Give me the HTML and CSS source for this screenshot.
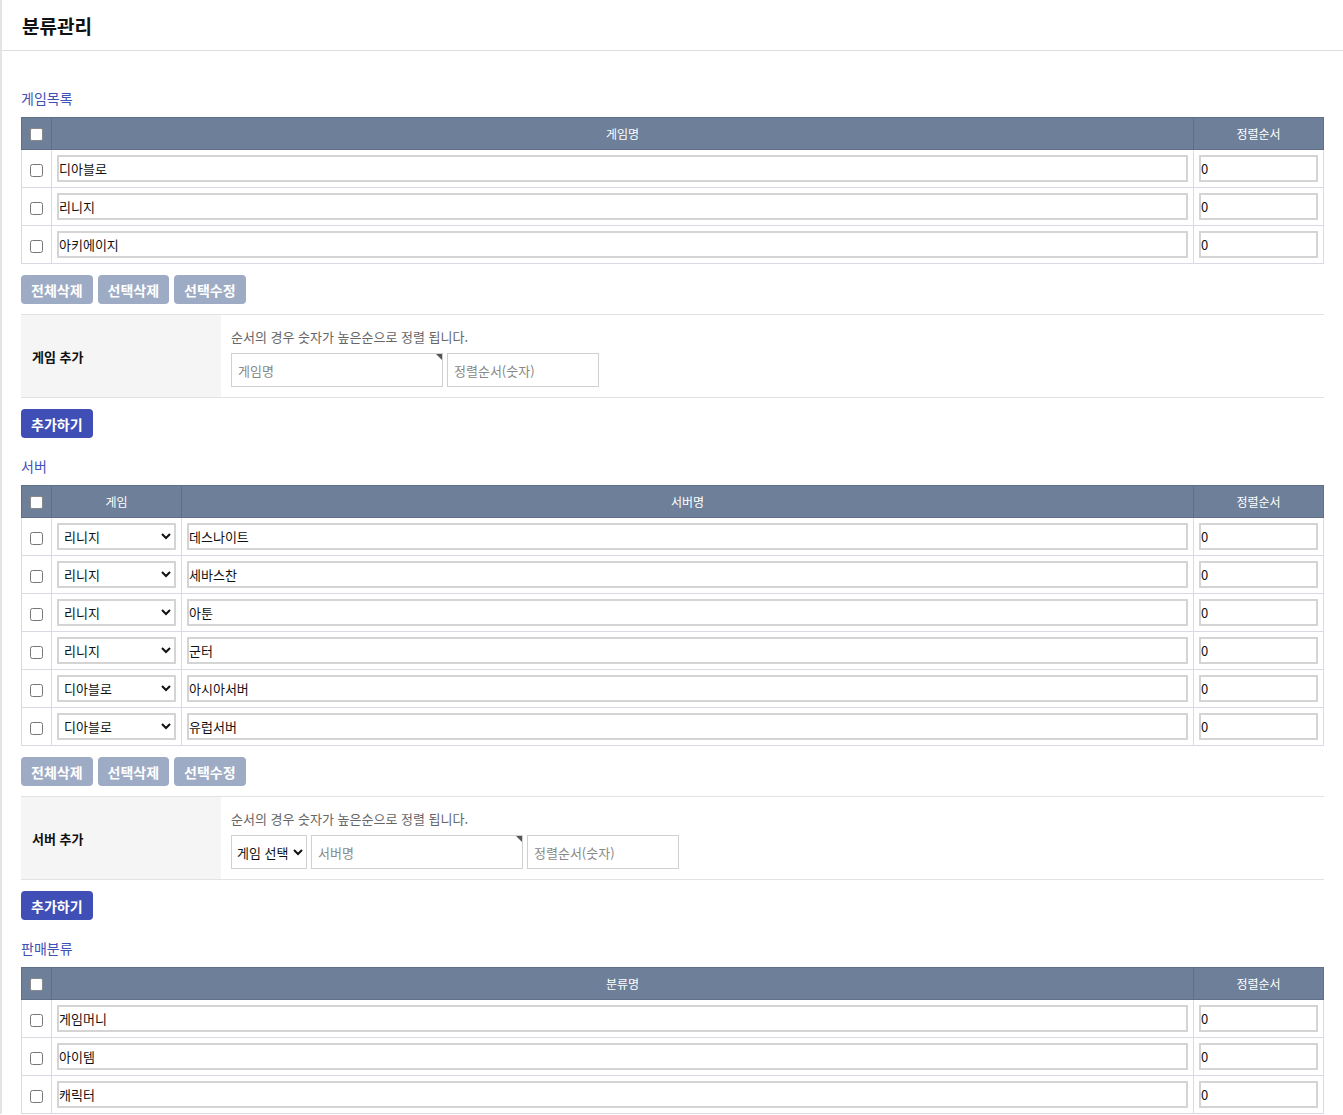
FILE: index.html
```html
<!DOCTYPE html>
<html lang="ko">
<head>
    <meta charset="UTF-8">
    <meta name="viewport" content="width=device-width, initial-scale=1.0">
    <title>분류관리</title>
    <link rel="stylesheet" href="styles.css">
</head>
<body>
    <div class="page-header">
        <h1>분류관리</h1>
    </div>

    <div class="content">
        <!-- 게임목록 -->
        <h2 class="section-title">게임목록</h2>
        <table class="list-table">
            <colgroup>
                <col class="col-check">
                <col>
                <col class="col-sort">
            </colgroup>
            <thead>
                <tr>
                    <th><input type="checkbox" class="head-check"></th>
                    <th>게임명</th>
                    <th>정렬순서</th>
                </tr>
            </thead>
            <tbody>
                <tr>
                    <td class="check"><input type="checkbox"></td>
                    <td><input type="text" class="cell-input" value="디아블로"></td>
                    <td><input type="text" class="cell-input" value="0"></td>
                </tr>
                <tr>
                    <td class="check"><input type="checkbox"></td>
                    <td><input type="text" class="cell-input" value="리니지"></td>
                    <td><input type="text" class="cell-input" value="0"></td>
                </tr>
                <tr>
                    <td class="check"><input type="checkbox"></td>
                    <td><input type="text" class="cell-input" value="아키에이지"></td>
                    <td><input type="text" class="cell-input" value="0"></td>
                </tr>
            </tbody>
        </table>
        <div class="btn-row">
            <button class="btn btn-gray">전체삭제</button>
            <button class="btn btn-gray">선택삭제</button>
            <button class="btn btn-gray">선택수정</button>
        </div>
        <div class="add-form">
            <div class="add-label">게임 추가</div>
            <div class="add-body">
                <p class="note">순서의 경우 숫자가 높은순으로 정렬 됩니다.</p>
                <div class="add-fields">
                    <span class="required"><input type="text" class="field-input field-name" placeholder="게임명"></span>
                    <input type="text" class="field-input field-sort" placeholder="정렬순서(숫자)">
                </div>
            </div>
        </div>
        <button class="btn btn-primary">추가하기</button>

        <!-- 서버 -->
        <h2 class="section-title">서버</h2>
        <table class="list-table">
            <colgroup>
                <col class="col-check">
                <col class="col-game">
                <col>
                <col class="col-sort">
            </colgroup>
            <thead>
                <tr>
                    <th><input type="checkbox" class="head-check"></th>
                    <th>게임</th>
                    <th>서버명</th>
                    <th>정렬순서</th>
                </tr>
            </thead>
            <tbody>
                <tr>
                    <td class="check"><input type="checkbox"></td>
                    <td><select class="cell-select"><option>리니지</option><option>디아블로</option><option>아키에이지</option></select></td>
                    <td><input type="text" class="cell-input" value="데스나이트"></td>
                    <td><input type="text" class="cell-input" value="0"></td>
                </tr>
                <tr>
                    <td class="check"><input type="checkbox"></td>
                    <td><select class="cell-select"><option>리니지</option><option>디아블로</option><option>아키에이지</option></select></td>
                    <td><input type="text" class="cell-input" value="세바스찬"></td>
                    <td><input type="text" class="cell-input" value="0"></td>
                </tr>
                <tr>
                    <td class="check"><input type="checkbox"></td>
                    <td><select class="cell-select"><option>리니지</option><option>디아블로</option><option>아키에이지</option></select></td>
                    <td><input type="text" class="cell-input" value="아툰"></td>
                    <td><input type="text" class="cell-input" value="0"></td>
                </tr>
                <tr>
                    <td class="check"><input type="checkbox"></td>
                    <td><select class="cell-select"><option>리니지</option><option>디아블로</option><option>아키에이지</option></select></td>
                    <td><input type="text" class="cell-input" value="군터"></td>
                    <td><input type="text" class="cell-input" value="0"></td>
                </tr>
                <tr>
                    <td class="check"><input type="checkbox"></td>
                    <td><select class="cell-select"><option>디아블로</option><option>리니지</option><option>아키에이지</option></select></td>
                    <td><input type="text" class="cell-input" value="아시아서버"></td>
                    <td><input type="text" class="cell-input" value="0"></td>
                </tr>
                <tr>
                    <td class="check"><input type="checkbox"></td>
                    <td><select class="cell-select"><option>디아블로</option><option>리니지</option><option>아키에이지</option></select></td>
                    <td><input type="text" class="cell-input" value="유럽서버"></td>
                    <td><input type="text" class="cell-input" value="0"></td>
                </tr>
            </tbody>
        </table>
        <div class="btn-row">
            <button class="btn btn-gray">전체삭제</button>
            <button class="btn btn-gray">선택삭제</button>
            <button class="btn btn-gray">선택수정</button>
        </div>
        <div class="add-form">
            <div class="add-label">서버 추가</div>
            <div class="add-body">
                <p class="note">순서의 경우 숫자가 높은순으로 정렬 됩니다.</p>
                <div class="add-fields">
                    <select class="field-select">
                        <option>게임 선택</option>
                        <option>디아블로</option>
                        <option>리니지</option>
                        <option>아키에이지</option>
                    </select>
                    <span class="required"><input type="text" class="field-input field-name" placeholder="서버명"></span>
                    <input type="text" class="field-input field-sort" placeholder="정렬순서(숫자)">
                </div>
            </div>
        </div>
        <button class="btn btn-primary">추가하기</button>

        <!-- 판매분류 -->
        <h2 class="section-title">판매분류</h2>
        <table class="list-table">
            <colgroup>
                <col class="col-check">
                <col>
                <col class="col-sort">
            </colgroup>
            <thead>
                <tr>
                    <th><input type="checkbox" class="head-check"></th>
                    <th>분류명</th>
                    <th>정렬순서</th>
                </tr>
            </thead>
            <tbody>
                <tr>
                    <td class="check"><input type="checkbox"></td>
                    <td><input type="text" class="cell-input" value="게임머니"></td>
                    <td><input type="text" class="cell-input" value="0"></td>
                </tr>
                <tr>
                    <td class="check"><input type="checkbox"></td>
                    <td><input type="text" class="cell-input" value="아이템"></td>
                    <td><input type="text" class="cell-input" value="0"></td>
                </tr>
                <tr>
                    <td class="check"><input type="checkbox"></td>
                    <td><input type="text" class="cell-input" value="캐릭터"></td>
                    <td><input type="text" class="cell-input" value="0"></td>
                </tr>
            </tbody>
        </table>
    </div>
</body>
</html>
```

FILE: styles.css
```css
body {
    margin: 0;
    font-family: "Noto Sans CJK KR", "Noto Sans", sans-serif;
    font-size: 13px;
    color: #222;
    background: #fff;
    border-left: 2px solid #e4e4e4;
}

.page-header {
    height: 50px;
    padding: 0 20px;
    border-bottom: 1px solid #ddd;
    display: flex;
    align-items: center;
}

.page-header h1 {
    margin: 0;
    font-size: 19px;
    font-weight: bold;
    color: #111;
}

.content {
    padding: 38px 19px 0 19px;
}

.section-title {
    margin: 0 0 10px;
    font-size: 14px;
    line-height: 18px;
    font-weight: normal;
    color: #3f51b5;
}

.list-table {
    width: 100%;
    border-collapse: collapse;
    table-layout: fixed;
}

.col-check {
    width: 30px;
}

.col-game {
    width: 130px;
}

.col-sort {
    width: 130px;
}

.list-table th {
    height: 32px;
    padding: 0;
    background: #6e7f99;
    color: #fff;
    font-size: 12px;
    font-weight: normal;
    border: 1px solid #5f6f88;
    box-sizing: border-box;
}

.list-table td {
    height: 38px;
    padding: 0 5px;
    border: 1px solid #d8dbe3;
    box-sizing: border-box;
}

.list-table td.check,
.list-table th:first-child {
    text-align: center;
    padding: 0;
}

.list-table input[type="checkbox"] {
    margin: 0;
    width: 13px;
    height: 13px;
    vertical-align: middle;
}

.list-table input.head-check {
    appearance: none;
    background: #fff;
    border: 1px solid #8a8a8a;
    border-radius: 2px;
    box-sizing: border-box;
    position: relative;
    top: -1px;
}

.cell-input {
    display: block;
    width: 100%;
    height: 27px;
    box-sizing: border-box;
    border: 2px solid #d4d4d4;
    padding: 0;
    font-family: inherit;
    font-size: 13px;
    color: #111;
    background: #fff;
}

.cell-select {
    display: block;
    width: 100%;
    height: 27px;
    box-sizing: border-box;
    border: 2px solid #d4d4d4;
    padding: 0 1px;
    font-family: inherit;
    font-size: 13px;
    color: #111;
    background: #fff;
}

.btn-row {
    display: flex;
    gap: 5px;
    margin-top: 11px;
}

.btn {
    height: 29px;
    padding: 0 10px;
    border: none;
    border-radius: 4px;
    font-family: inherit;
    font-size: 14px;
    font-weight: bold;
    color: #fff;
    cursor: pointer;
}

.btn-gray {
    background: #9eabc4;
}

.btn-primary {
    display: block;
    margin-top: 11px;
    margin-bottom: 19px;
    background: #3f4fb5;
}

.add-form {
    display: flex;
    margin-top: 10px;
    border-top: 1px solid #e2e2e2;
    border-bottom: 1px solid #e2e2e2;
}

.add-label {
    width: 200px;
    flex-shrink: 0;
    box-sizing: border-box;
    padding-left: 11px;
    background: #f5f5f5;
    display: flex;
    align-items: center;
    font-weight: bold;
    color: #111;
}

.add-body {
    padding: 13px 10px 10px;
}

.note {
    margin: 0 0 7px;
    line-height: 18px;
    color: #666;
}

.add-fields {
    display: flex;
    gap: 4px;
}

.required {
    position: relative;
    display: block;
}

.required::after {
    content: "";
    position: absolute;
    top: 1px;
    right: 1px;
    border-top: 6px solid #555;
    border-left: 6px solid transparent;
}

.field-input {
    display: block;
    height: 34px;
    box-sizing: border-box;
    border: 1px solid #d0d0d0;
    padding: 0 6px;
    font-family: inherit;
    font-size: 13px;
    color: #111;
}

.field-input::placeholder {
    color: #888;
}

.field-name {
    width: 212px;
}

.field-sort {
    width: 152px;
}

.field-select {
    width: 76px;
    height: 34px;
    box-sizing: border-box;
    border: 1px solid #d0d0d0;
    padding: 0 1px;
    font-family: inherit;
    font-size: 13px;
    color: #111;
    background: #fff;
}
```
